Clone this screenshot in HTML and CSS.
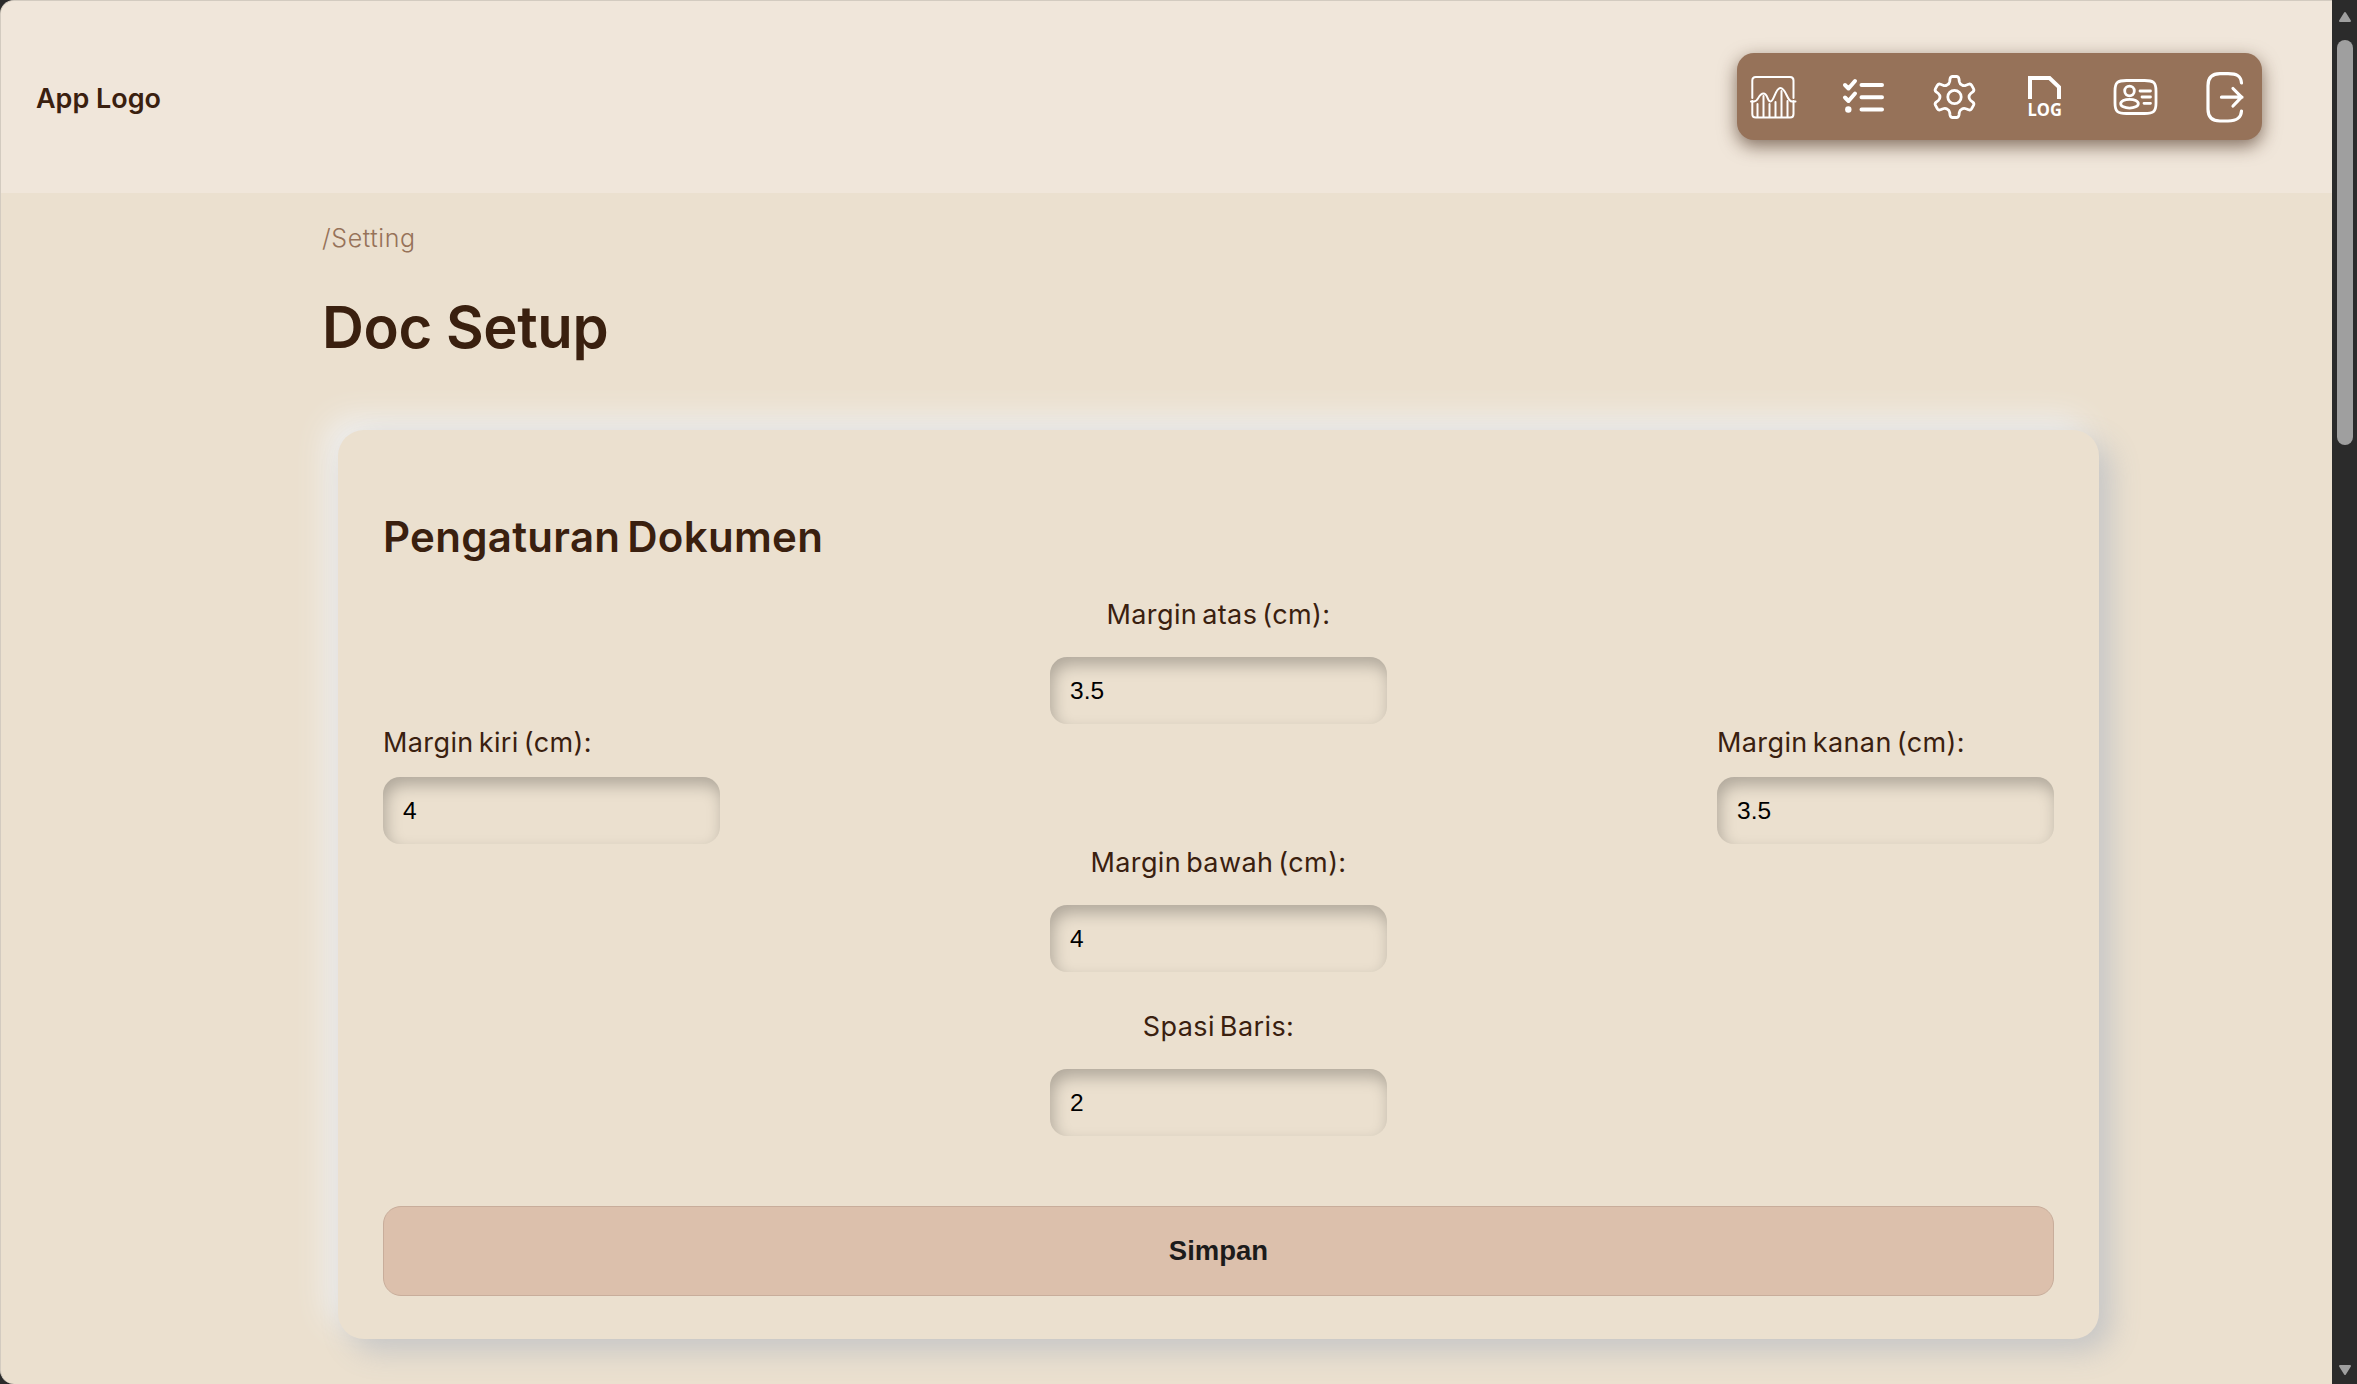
FILE: index.html
```html
<!doctype html>
<html lang="id">
<head>
<meta charset="utf-8">
<title>Doc Setup</title>
<link rel="stylesheet" href="styles.css">
</head>
<body>
<div id="window">
  <div id="page">
    <header>
      <a class="logo" href="#"><svg class="logo-svg" width="140" height="60" viewBox="0 0 140 60"><text x="0" y="41" textLength="125" lengthAdjust="spacingAndGlyphs">App Logo</text></svg></a>
      <nav>
        <a href="#" title="Dashboard">
          <svg width="48" height="48" viewBox="0 0 48 48" stroke-width="2">
            <path d="M3.300 25V7.500Q3.300 4 6.800 4H41.200Q44.500 4 44.500 7.500V25M3.300 28V41Q3.300 44.500 6.800 44.500H41.200Q44.500 44.500 44.500 41V28"/>
            <path d="M2 28.500H5C10 28.500 9 20.500 14.500 20.500C19 20.500 18 28.500 21.500 28.500C25 28.500 26.500 15 31.500 15C37 15 38 28.500 43 28.500H46.500"/>
            <path d="M8.500 31V44M14.500 23V44M20.500 31V44M26.500 29V44M32.500 18V44M38.500 28V44"/>
          </svg>
        </a>
        <a href="#" title="Daftar">
          <svg width="48" height="48" viewBox="0 0 48 48" stroke-width="4">
            <path d="M6 12L9.500 15.500L16 8M6 24.500L9.500 28L16 20.500M22.500 12H43M22.500 24.300H43M22.500 36.500H43"/>
            <circle class="dot" cx="9.300" cy="36.500" r="3.200"/>
          </svg>
        </a>
        <a href="#" title="Pengaturan">
          <svg width="48" height="48" viewBox="0 0 48 48" stroke-width="2.800">
            <path d="M22.500 3.500H26.500Q28.500 3.500 29 6L29.300 8.500Q29.700 11 32 12Q33.800 13.200 36 12.200L38.500 11.200Q40.500 10.500 41.600 12.300L43.500 15.600Q44.500 17.500 42.800 18.900L40.700 20.500Q39 22 39 24Q39 26 40.700 27.500L42.800 29.100Q44.500 30.500 43.500 32.400L41.600 35.700Q40.500 37.500 38.500 36.800L36 35.800Q33.800 34.800 32 36Q29.700 37 29.300 39.500L29 42Q28.500 44.500 26.500 44.500H22.500Q20.500 44.500 20 42L19.700 39.500Q19.300 37 17 36Q15.200 34.800 13 35.800L10.500 36.800Q8.500 37.500 7.400 35.700L5.500 32.400Q4.500 30.500 6.200 29.100L8.300 27.500Q10 26 10 24Q10 22 8.300 20.500L6.200 18.900Q4.500 17.500 5.500 15.600L7.400 12.300Q8.500 10.500 10.500 11.200L13 12.200Q15.200 13.200 17 12Q19.300 11 19.700 8.500L20 6Q20.500 3.500 22.500 3.500Z"/>
            <circle cx="24.500" cy="24" r="6.700"/>
          </svg>
        </a>
        <a href="#" title="Log">
          <svg width="48" height="48" viewBox="0 0 48 48">
            <path class="sheet" stroke-width="4" d="M10 26V5H29.500L39 14V26"/>
            <text class="log" x="7.500" y="42.500" textLength="34.500" lengthAdjust="spacingAndGlyphs">LOG</text>
          </svg>
        </a>
        <a href="#" title="Profil">
          <svg width="48" height="48" viewBox="0 0 48 48" stroke-width="2.800">
            <path d="M15.500 7.500H33.500C42.500 7.500 45 9.500 45 18V30C45 38.500 42.500 40.500 33.500 40.500H15.500C6.500 40.500 4 38.500 4 30V18C4 9.500 6.500 7.500 15.500 7.500Z"/>
            <circle cx="18.500" cy="18" r="4.800"/>
            <ellipse cx="18.500" cy="30.700" rx="8.800" ry="4.400"/>
            <path d="M29 18H39.500M31 24H39.500M33 30.300H39.500"/>
          </svg>
        </a>
        <a href="#" title="Keluar">
          <svg width="48" height="54" viewBox="0 0 48 54" stroke-width="3.200">
            <path d="M40.500 13C40 6 36 3.700 27 3.700H19Q7 3.700 7 15.700V39.300Q7 51 19 51H27C36 51 40 48 40.500 41M20.500 27.200H41M32 18.500L40.500 27.200L32 36"/>
          </svg>
        </a>
      </nav>
    </header>
    <main>
      <div class="crumb"><span>/Setting</span></div>
      <h1><span>Doc Setup</span></h1>
      <form class="card">
        <h2><span>Pengaturan Dokumen</span></h2>
        <div class="margins">
          <div class="field atas">
            <label for="atas">Margin atas (cm):</label>
            <input id="atas" type="text" value="3.5">
          </div>
          <div class="sides">
            <div class="field side">
              <label for="kiri">Margin kiri (cm):</label>
              <input id="kiri" type="text" value="4">
            </div>
            <div class="field side">
              <label for="kanan">Margin kanan (cm):</label>
              <input id="kanan" type="text" value="3.5">
            </div>
          </div>
          <div class="field bawah">
            <label for="bawah">Margin bawah (cm):</label>
            <input id="bawah" type="text" value="4">
          </div>
          <div class="field spasi">
            <label for="spasi">Spasi Baris:</label>
            <input id="spasi" type="text" value="2">
          </div>
        </div>
        <button type="button">Simpan</button>
      </form>
    </main>
  </div>
  <div class="scrollbar">
    <svg width="14" height="12" viewBox="0 0 14 12"><path d="M7 2L12 10H2Z"/></svg>
    <div class="thumb"></div>
    <svg width="14" height="12" viewBox="0 0 14 12"><path d="M7 10L2 2H12Z"/></svg>
  </div>
</div>
</body>
</html>
```

FILE: styles.css
```css
* {
  box-sizing: border-box;
}
html, body {
  margin: 0;
  padding: 0;
  height: 100%;
  overflow: hidden;
  background: #2b2b2b;
}
body {
  font-family: Inter, "Liberation Sans", sans-serif;
  color: #3a200f;
}
#window {
  display: flex;
  height: 1384px;
}
#page {
  width: 2332px;
  height: 1384px;
  overflow: hidden;
  border: 1px solid #d3cbc0;
  border-right: 0;
  border-bottom: 0;
  border-radius: 14px 0 0 14px;
  background: #ebe0cf;
}
header {
  display: flex;
  align-items: center;
  justify-content: space-between;
  height: 192px;
  padding: 0 70px 1px 35px;
  background: #f0e6da;
}
.logo {
  display: block;
  height: 60px;
}
.logo-svg text {
  font: 600 27px Inter, sans-serif;
  fill: #3a200f;
}
nav {
  display: flex;
  align-items: center;
  gap: 42.400px;
  width: 525px;
  height: 87px;
  padding: 0 12px;
  border-radius: 17px;
  background: #967259;
  box-shadow: 0 6px 18px rgba(58, 32, 15, .6);
}
nav a {
  display: flex;
}
nav svg {
  fill: none;
  stroke: #fff;
  stroke-linecap: round;
  stroke-linejoin: round;
}
nav .dot {
  fill: #fff;
  stroke: none;
}
nav .sheet {
  stroke-linecap: butt;
  stroke-linejoin: miter;
}
nav .log {
  font: 700 17px "Open Sans", sans-serif;
  fill: #fff;
  stroke: none;
}
main {
  padding: 0 233px 0 321px;
}
.crumb {
  height: 91px;
  padding-top: 30px;
  font-size: 25px;
  font-weight: 300;
  line-height: 30px;
  letter-spacing: .6px;
  color: #967259;
}
h1 {
  margin: 0;
  height: 146px;
  padding-top: 8px;
  font-size: 58px;
  font-weight: 600;
  line-height: 70px;
  letter-spacing: -.4px;
}
.card {
  width: 1761px;
  height: 909px;
  margin-left: 16px;
  padding: 45px;
  border-radius: 26px;
  background: #ebe0cf;
  box-shadow: 12px 12px 30px #c5c5c5, -12px -12px 30px #f0f0f0;
}
h2 {
  margin: 0;
  padding-top: 36px;
  height: 117px;
  font-size: 42px;
  font-weight: 600;
  line-height: 52px;
  letter-spacing: .3px;
  word-spacing: -4px;
}
.margins {
  display: flex;
  flex-direction: column;
  align-items: center;
}
.field {
  display: flex;
  flex-direction: column;
  align-items: center;
}
.field label {
  font-size: 27px;
  line-height: 36px;
  letter-spacing: .4px;
  word-spacing: -3px;
  white-space: nowrap;
}
.field input {
  width: 337px;
  height: 67px;
  margin: 0;
  padding: 0 20px;
  border: 0;
  border-radius: 17px;
  background: #ebe0cf;
  box-shadow: inset 3px 8px 16px rgba(0, 0, 0, .25);
  font: 24.500px "Liberation Sans", Arial, sans-serif;
  color: #000;
  outline: none;
}
.atas,
.bawah,
.spasi {
  gap: 24px;
}
.atas {
  margin-top: 5px;
}
.sides {
  display: flex;
  justify-content: space-between;
  width: 100%;
  margin-top: 1px;
}
.side {
  align-items: flex-start;
  gap: 16px;
}
.bawah {
  margin-top: 1px;
}
.spasi {
  margin-top: 37px;
}
button {
  display: block;
  width: 100%;
  height: 90px;
  margin-top: 70px;
  border: 1px solid #c8ad9b;
  border-radius: 18px;
  background: #dcc0ac;
  font: 700 27.500px "Liberation Sans", Arial, sans-serif;
  color: #1c1b1b;
}
.scrollbar {
  display: flex;
  flex-direction: column;
  align-items: center;
  width: 25px;
  padding: 11px 0 8px;
}
.scrollbar svg {
  fill: #9f9f9f;
  stroke: #9f9f9f;
  stroke-width: 2;
  stroke-linejoin: round;
}
.thumb {
  width: 16px;
  height: 405px;
  margin: 17px 0 auto;
  border-radius: 8px;
  background: #9f9f9f;
}
```
